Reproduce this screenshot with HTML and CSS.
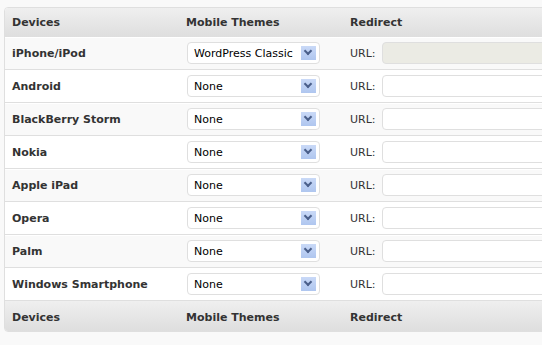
FILE: index.html
```html
<!doctype html>
<html lang="en">
<head>
	<meta charset="UTF-8">
	<title>Mobile Themes</title>
	<link rel="stylesheet" href="styles.css">
</head>
<body>
	<table class="widefat">
		<thead>
			<tr>
				<th class="col-device">Devices</th>
				<th class="col-theme">Mobile Themes</th>
				<th>Redirect</th>
			</tr>
		</thead>
		<tbody>
			<tr class="alternate">
				<td class="device">iPhone/iPod</td>
				<td><span class="pick"><select><option>WordPress Classic</option></select><span class="arrow"></span></span></td>
				<td><label class="url">URL: <input type="text" disabled></label></td>
			</tr>
			<tr>
				<td class="device">Android</td>
				<td><span class="pick"><select><option>None</option></select><span class="arrow"></span></span></td>
				<td><label class="url">URL: <input type="text"></label></td>
			</tr>
			<tr class="alternate">
				<td class="device">BlackBerry Storm</td>
				<td><span class="pick"><select><option>None</option></select><span class="arrow"></span></span></td>
				<td><label class="url">URL: <input type="text"></label></td>
			</tr>
			<tr>
				<td class="device">Nokia</td>
				<td><span class="pick"><select><option>None</option></select><span class="arrow"></span></span></td>
				<td><label class="url">URL: <input type="text"></label></td>
			</tr>
			<tr class="alternate">
				<td class="device">Apple iPad</td>
				<td><span class="pick"><select><option>None</option></select><span class="arrow"></span></span></td>
				<td><label class="url">URL: <input type="text"></label></td>
			</tr>
			<tr>
				<td class="device">Opera</td>
				<td><span class="pick"><select><option>None</option></select><span class="arrow"></span></span></td>
				<td><label class="url">URL: <input type="text"></label></td>
			</tr>
			<tr class="alternate">
				<td class="device">Palm</td>
				<td><span class="pick"><select><option>None</option></select><span class="arrow"></span></span></td>
				<td><label class="url">URL: <input type="text"></label></td>
			</tr>
			<tr>
				<td class="device">Windows Smartphone</td>
				<td><span class="pick"><select><option>None</option></select><span class="arrow"></span></span></td>
				<td><label class="url">URL: <input type="text"></label></td>
			</tr>
		</tbody>
		<tfoot>
			<tr>
				<th>Devices</th>
				<th>Mobile Themes</th>
				<th>Redirect</th>
			</tr>
		</tfoot>
	</table>
</body>
</html>
```
FILE: styles.css
```css
body {
	margin: 0;
	overflow: hidden;
	background-color: #f9f9f9;
	color: #333;
	font: 400 11px "DejaVu Sans", Verdana, sans-serif;
}

.widefat {
	margin: 7px 0 0 4px;
	width: 720px;
	border: 1px solid #dfdfdf;
	border-radius: 4px;
	border-spacing: 0;
	background-color: #fff;
}

.widefat th {
	height: 29px;
	padding: 0 7px;
	text-align: left;
	font-weight: bold;
	color: #333;
	background: linear-gradient(#efefef, #dedede);
}

.widefat tfoot th {
	height: 28px;
	padding-top: 2px;
}

.widefat thead th:first-child {
	border-top-left-radius: 3px;
}

.widefat tfoot th:first-child {
	border-bottom-left-radius: 3px;
}

.col-device {
	width: 160px;
}

.col-theme {
	width: 150px;
}

.widefat td {
	height: 28px;
	padding: 1px 7px 2px;
	border-top: 1px solid #fff;
	border-bottom: 1px solid #dfdfdf;
	vertical-align: middle;
}

.alternate td {
	background-color: #f9f9f9;
}

.device {
	font-weight: bold;
}

.pick {
	position: relative;
	display: inline-block;
	vertical-align: middle;
}

.pick select {
	display: block;
	width: 133px;
	height: 22px;
	margin-left: 1px;
	padding: 0 0 0 6px;
	border: 1px solid #dfdfdf;
	border-radius: 4px;
	background: #fff;
	color: #000;
	font: 400 11px "DejaVu Sans", Verdana, sans-serif;
	appearance: none;
	-webkit-appearance: none;
}

.arrow {
	position: absolute;
	right: 4px;
	top: 4px;
	width: 15px;
	height: 14px;
	background: linear-gradient(#c9d9f7, #afc6ef);
}

.arrow::after {
	position: absolute;
	left: 4px;
	top: 2px;
	content: "";
	width: 4px;
	height: 4px;
	border-right: 2px solid #4a5f8a;
	border-bottom: 2px solid #4a5f8a;
	transform: rotate(45deg);
}

.url {
	display: flex;
	align-items: center;
	gap: 6px;
	color: #333;
}

.url input {
	width: 330px;
	height: 22px;
	box-sizing: border-box;
	border: 1px solid #dfdfdf;
	border-radius: 4px;
	background: #fff;
}

.url input:disabled {
	background: #ebebe4;
}
```
